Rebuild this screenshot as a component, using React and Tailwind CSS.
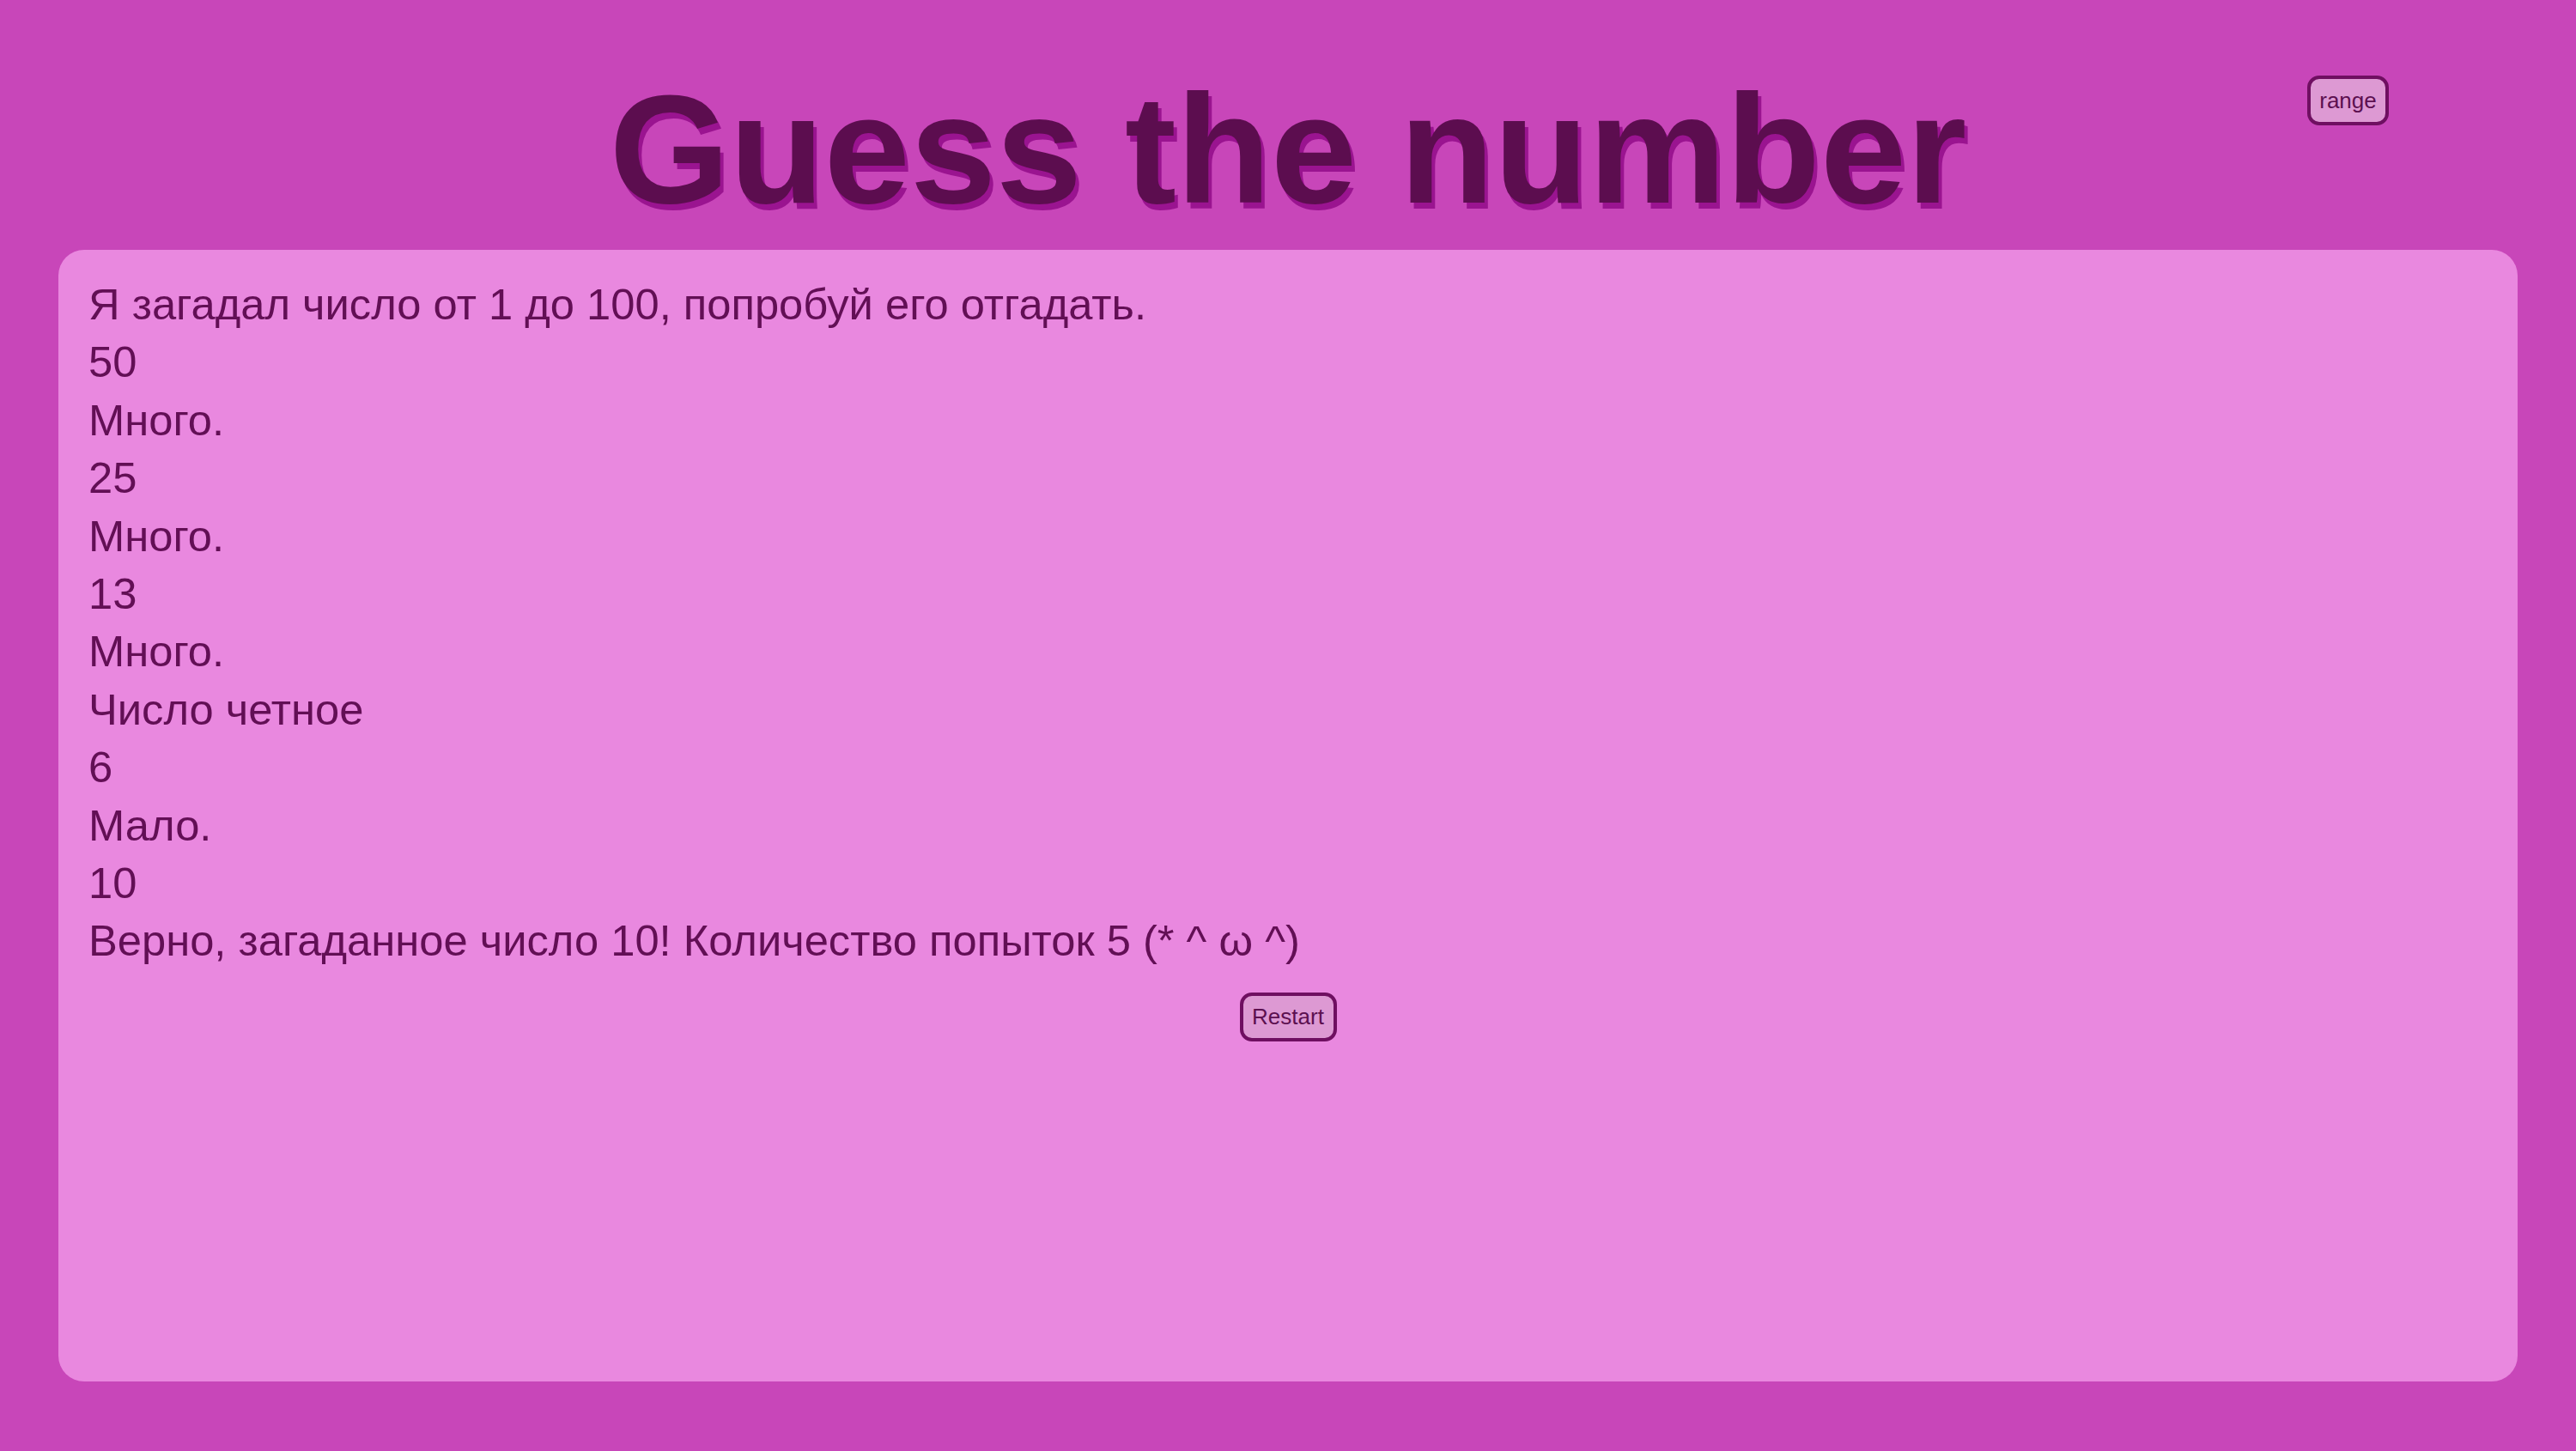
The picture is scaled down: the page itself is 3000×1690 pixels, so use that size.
import React from "react";

const lines = [
  "Я загадал число от 1 до 100, попробуй его отгадать.",
  "50",
  "Много.",
  "25",
  "Много.",
  "13",
  "Много.",
  "Число четное",
  "6",
  "Мало.",
  "10",
  "Верно, загаданное число 10! Количество попыток 5 (* ^ ω ^)",
];

export default function App() {
  return (
    <div
      className="relative w-[3000px] h-[1690px] bg-[#c846b9] flex flex-col items-center"
      style={{ fontFamily: '"Liberation Sans", Arial, sans-serif' }}
    >
      <button className="absolute left-[2687px] top-[88px] w-[95px] h-[58px] rounded-[14px] border-[4px] border-[#6f0f61] bg-[#dd99d3] text-[26px] text-[#5c1050] leading-none">
        range
      </button>
      <h1 className="pt-[70px] text-[180px] font-bold leading-[207px] text-[#5c0d4f] [text-shadow:4px_7px_0_#9a1490] whitespace-nowrap">
        Guess the number
      </h1>
      <div className="mt-[14px] w-[2864px] h-[1318px] rounded-[30px] bg-[#e988df] pt-[30px] px-[35px] flex flex-col">
        <div className="text-[50.7px] leading-[67.4px] text-[#620f55]">
          {lines.map((l, i) => (
            <div key={i}>{l}</div>
          ))}
        </div>
        <div className="flex justify-center mt-[26px]">
          <button className="w-[113px] h-[57px] rounded-[14px] border-[4px] border-[#6f0f61] bg-[#dd99d3] text-[26px] text-[#5c1050] leading-none">
            Restart
          </button>
        </div>
      </div>
    </div>
  );
}
